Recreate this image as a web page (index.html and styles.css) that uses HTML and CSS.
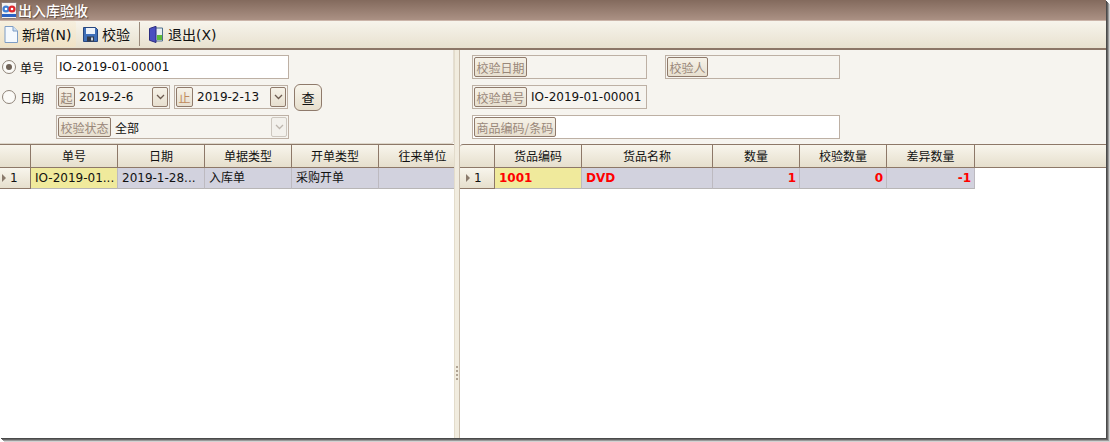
FILE: index.html
```html
<!DOCTYPE html>
<html lang="zh">
<head>
<meta charset="utf-8">
<title>出入库验收</title>
<link rel="stylesheet" href="styles.css">
</head>
<body>
<div class="window">
  <header class="titlebar">
    <svg class="logo" width="16" height="17" viewBox="0 0 16 17">
      <rect x="0.5" y="0.5" width="15" height="16" rx="1" fill="#f4f1f0" stroke="#8b7a78"/>
      <circle cx="5" cy="7" r="3.600" fill="#3f7fd6"/>
      <circle cx="11" cy="7" r="3.600" fill="#e0252c"/>
      <circle cx="5" cy="7" r="1.300" fill="#fff"/>
      <circle cx="11" cy="7" r="1.300" fill="#fff"/>
      <rect x="1" y="12" width="14" height="3" fill="#2a62c4"/>
    </svg>
    <span class="title-text">出入库验收</span>
  </header>

  <nav class="toolbar">
    <button class="tool tool-hot">
      <svg width="14" height="17" viewBox="0 0 14 17"><path d="M1 .5h8l4.500 4.500v11.500h-12.500z" fill="#f5f9fe" stroke="#7d9cc4"/><path d="M9 .5v4.500h4.500" fill="#cfe0f4" stroke="#7d9cc4"/></svg>
      <span>新增(N)</span>
    </button>
    <button class="tool">
      <svg width="15" height="15" viewBox="0 0 15 15"><path d="M.5 .5h12l2 2v12h-14z" fill="#3f6fb8" stroke="#27477f"/><rect x="3" y="1" width="9" height="6" fill="#eef3fa"/><rect x="4" y="9.500" width="7" height="5" fill="#333a48"/><rect x="8" y="10.500" width="2" height="3" fill="#c9d3e2"/></svg>
      <span>校验</span>
    </button>
    <span class="tool-sep"></span>
    <button class="tool tool-exit">
      <svg width="14" height="17" viewBox="0 0 14 17"><path d="M6 2h7.500v13h-7.500z" fill="#e8eef2" stroke="#4e6f8c"/><rect x="8" y="9" width="5" height="5" fill="#5dbb3c"/><path d="M.5 2.500l6.500-2.200v16.200l-6.500-2.200z" fill="#4a4fc0" stroke="#2b2d80"/></svg>
      <span>退出(X)</span>
    </button>
  </nav>

  <main class="workspace">
    <section class="pane pane-left">
      <div class="form form-left">
        <div class="form-row">
          <label class="choice"><span class="radio radio-on"></span><span>单号</span></label>
          <div class="field field-white field-main"><span class="value">IO-2019-01-00001</span></div>
        </div>
        <div class="form-row">
          <label class="choice"><span class="radio"></span><span>日期</span></label>
          <div class="field field-date">
            <span class="tag">起</span><span class="value">2019-2-6</span>
            <span class="drop"><svg width="9" height="6" viewBox="0 0 9 6"><path d="M1 1l3.500 3.500 3.500-3.500" fill="none" stroke="#6d5c50" stroke-width="1.300"/></svg></span>
          </div>
          <div class="field field-date field-date-end">
            <span class="tag tag-orange">止</span><span class="value">2019-2-13</span>
            <span class="drop"><svg width="9" height="6" viewBox="0 0 9 6"><path d="M1 1l3.500 3.500 3.500-3.500" fill="none" stroke="#6d5c50" stroke-width="1.300"/></svg></span>
          </div>
          <button class="query">查</button>
        </div>
        <div class="form-row">
          <span class="choice"></span>
          <div class="field field-main">
            <span class="tag">校验状态</span><span class="value">全部</span>
            <span class="drop drop-off"><svg width="9" height="6" viewBox="0 0 9 6"><path d="M1 1l3.500 3.500 3.500-3.500" fill="none" stroke="#bdb6ae" stroke-width="1.300"/></svg></span>
          </div>
        </div>
      </div>
      <div class="grid">
        <div class="grid-row grid-head cols-left">
          <span class="cell"></span><span class="cell">单号</span><span class="cell">日期</span><span class="cell">单据类型</span><span class="cell">开单类型</span><span class="cell">往来单位</span>
        </div>
        <div class="grid-row grid-body cols-left">
          <span class="cell cell-index"><i class="arrow"></i>1</span>
          <span class="cell cell-current">IO-2019-01...</span>
          <span class="cell">2019-1-28...</span>
          <span class="cell">入库单</span>
          <span class="cell">采购开单</span>
          <span class="cell"></span>
        </div>
      </div>
    </section>

    <div class="splitter"><span class="grip"></span></div>

    <section class="pane pane-right">
      <div class="form form-right">
        <div class="form-row">
          <div class="field field-short"><span class="tag">校验日期</span></div>
          <div class="field field-short field-next"><span class="tag">校验人</span></div>
        </div>
        <div class="form-row">
          <div class="field field-short"><span class="tag">校验单号</span><span class="value">IO-2019-01-00001</span></div>
        </div>
        <div class="form-row">
          <div class="field field-white field-wide"><span class="tag">商品编码/条码</span></div>
        </div>
      </div>
      <div class="grid">
        <div class="grid-row grid-head cols-right">
          <span class="cell"></span><span class="cell">货品编码</span><span class="cell">货品名称</span><span class="cell">数量</span><span class="cell">校验数量</span><span class="cell">差异数量</span>
        </div>
        <div class="grid-row grid-body grid-red cols-right">
          <span class="cell cell-index cell-index-wide"><i class="arrow"></i>1</span>
          <span class="cell cell-current">1001</span>
          <span class="cell">DVD</span>
          <span class="cell cell-num">1</span>
          <span class="cell cell-num">0</span>
          <span class="cell cell-num">-1</span>
        </div>
      </div>
    </section>
  </main>
</div>
</body>
</html>
```
FILE: styles.css
```css
* { box-sizing: border-box; }
html, body { margin: 0; padding: 0; width: 1110px; height: 442px; overflow: hidden; background: #fff; }
body {
  font-family: "DejaVu Sans", "Noto Sans CJK SC", sans-serif;
  font-size: 12px;
  color: #111;
}
.window {
  width: 1106px;
  height: 438px;
  display: flex;
  flex-direction: column;
  background: #fff;
  box-shadow: 1px 1px 0 #4a4a4a, 2px 2px 0 #666, 3px 3px 0 #9a9a9a, 4px 4px 0 #d2d2d2;
}
.titlebar {
  height: 21px;
  flex: none;
  display: flex;
  align-items: center;
  padding-left: 1px;
  gap: 1px;
  background: linear-gradient(#836a5d, #ab9184);
  border-bottom: 1px solid #cbb4a9;
}
.title-text {
  font-family: "Noto Sans CJK SC", sans-serif;
  font-size: 14px;
  font-weight: 500;
  color: #fff;
  text-shadow: 1px 1px 1px #5d4a40;
}
.toolbar {
  height: 29px;
  flex: none;
  display: flex;
  align-items: center;
  padding-bottom: 1px;
  background: linear-gradient(#f7f4ec, #e8e1cf);
  border-bottom: 2px solid #8c7667;
}
.tool {
  height: 26px;
  padding: 0 3px 0 4px;
  display: flex;
  align-items: center;
  gap: 4px;
  border: 0;
  background: none;
  font: 14px "DejaVu Sans", "Noto Sans CJK SC", sans-serif;
  color: #111;
  white-space: nowrap;
}
.tool-hot {
  width: 76px;
  background: linear-gradient(#f6efdf, #f0e2c6);
  border-radius: 2px;
}
.tool + .tool { margin-left: 3px; }
.tool-sep { width: 1px; height: 24px; margin: 0 5px 0 6px; background: #9a8a7c; }
.tool-exit { padding-left: 4px; gap: 5px; }
.workspace { flex: 1; min-height: 0; display: flex; }
.pane { display: flex; flex-direction: column; min-width: 0; overflow: hidden; }
.pane-left { width: 454px; flex: none; }
.pane-right { flex: 1; }
.splitter {
  width: 6px;
  flex: none;
  display: flex;
  align-items: center;
  justify-content: center;
  background: #f1ecdf;
  border-left: 1px solid #e3dccb;
  border-right: 1px solid #c9bdac;
}
.grip {
  width: 2px;
  height: 14px;
  margin-top: 258px;
  background: repeating-linear-gradient(#b0a494 0 2px, transparent 2px 4px);
}
.form {
  height: 94px;
  flex: none;
  padding-top: 5px;
  display: flex;
  flex-direction: column;
  gap: 6px;
  background: #f6f4ef;
}
.form-left { border-right: 1px solid #e4ded2; border-bottom: 1px solid #ddd6c9; border-bottom-right-radius: 3px; }
.form-right { padding-left: 12px; }
.form-row { height: 24px; display: flex; align-items: center; }
.choice {
  width: 56px;
  flex: none;
  display: flex;
  align-items: center;
  gap: 4px;
  padding-left: 2px;
  font-family: "Noto Sans CJK SC", sans-serif;
}
.radio {
  width: 14px;
  height: 14px;
  flex: none;
  border: 1px solid #8f8479;
  border-radius: 50%;
  background: #fbfaf7;
  display: flex;
  align-items: center;
  justify-content: center;
}
.radio-on::after { content: ""; width: 6px; height: 6px; border-radius: 50%; background: #6f6257; }
.field {
  height: 24px;
  display: flex;
  align-items: center;
  padding-left: 1px;
  border: 1px solid #bdb0a4;
  background: #f6f4ef;
}
.field-white { background: #fff; }
.field-main { width: 233px; }
.field-date { width: 114px; }
.field-date-end { margin-left: 4px; }
.field-short { width: 175px; }
.field-next { margin-left: 18px; }
.field-wide { width: 368px; }
.value { padding-left: 4px; white-space: nowrap; font-family: "DejaVu Sans", "Noto Sans CJK SC", sans-serif; }
.value:first-child { padding-left: 1px; }
.tag {
  height: 20px;
  padding: 0 1.500px;
  display: flex;
  align-items: center;
  flex: none;
  border: 1px solid #8f7a6b;
  border-radius: 2px;
  background: linear-gradient(#f6f2e8, #e7dfcf);
  color: #998779;
  font-family: "Noto Sans CJK SC", sans-serif;
  font-size: 12px;
  white-space: nowrap;
}
.tag-orange { color: #bf8a5e; }
.field-date .tag { width: 17px; padding: 0; justify-content: center; }
.drop {
  width: 16px;
  height: 20px;
  margin-left: auto;
  margin-right: 1px;
  display: flex;
  align-items: center;
  justify-content: center;
  border: 1px solid #8f7a6b;
  border-radius: 2px;
  background: linear-gradient(#f6f2e8, #e7dfcf);
}
.drop-off { border-color: #cdc7bf; background: #f3f1ec; }
.query {
  width: 28px;
  height: 27px;
  margin-left: 6px;
  padding: 0;
  border: 1px solid #8f7a6b;
  border-radius: 6px;
  background: linear-gradient(#f8f5ec, #e7dfcd);
  font: 13px "Noto Sans CJK SC", sans-serif;
  color: #111;
}
.grid { flex: 1; min-height: 0; background: #fff; }
.grid-row { display: grid; white-space: nowrap; }
.cols-left { grid-template-columns: 31px 87px 87px 87px 87px 87px; }
.cols-right { grid-template-columns: 35px 87px 131px 87px 87px 88px; }
.cell { overflow: hidden; min-width: 0; }
.grid-head {
  height: 24px;
  background: linear-gradient(#f8f5ec, #e6dfcd);
  border-top: 1px solid #8d7868;
  border-bottom: 1px solid #8d7868;
}
.grid-head.cols-right { border-top-left-radius: 3px; }
.grid-head .cell {
  line-height: 21px;
  text-align: center;
  border-right: 1px solid #8d7868;
  font-family: "Noto Sans CJK SC", sans-serif;
}
.cols-left.grid-head .cell:last-child { border-right: 0; }
.grid-body { height: 21px; width: max-content; }
.cols-left.grid-body { width: 454px; overflow: hidden; }
.grid-body .cell {
  line-height: 20px;
  padding: 0 3px 0 4px;
  background: #d2d2de;
  border-right: 1px solid #bdbac0;
  border-bottom: 1px solid #b8b6b6;
  font-family: "DejaVu Sans", "Noto Sans CJK SC", sans-serif;
}
.grid-body .cell-current { background: #f0ea9c; }
.grid-body .cell-index {
  display: flex;
  align-items: center;
  gap: 4px;
  padding-left: 2px;
  background: linear-gradient(#f8f5ec, #e6dfcd);
  border-right: 1px solid #8d7868;
  border-bottom: 1px solid #8d7868;
}
.grid-body .cell-index-wide { padding-left: 6px; }
.arrow {
  width: 0;
  height: 0;
  border-left: 4px solid #8a7a6c;
  border-top: 4px solid transparent;
  border-bottom: 4px solid transparent;
}
.grid-red .cell:not(.cell-index) { color: #ff0000; font-weight: 700; }
.grid-body .cell-num { text-align: right; padding-right: 3px; }
```
